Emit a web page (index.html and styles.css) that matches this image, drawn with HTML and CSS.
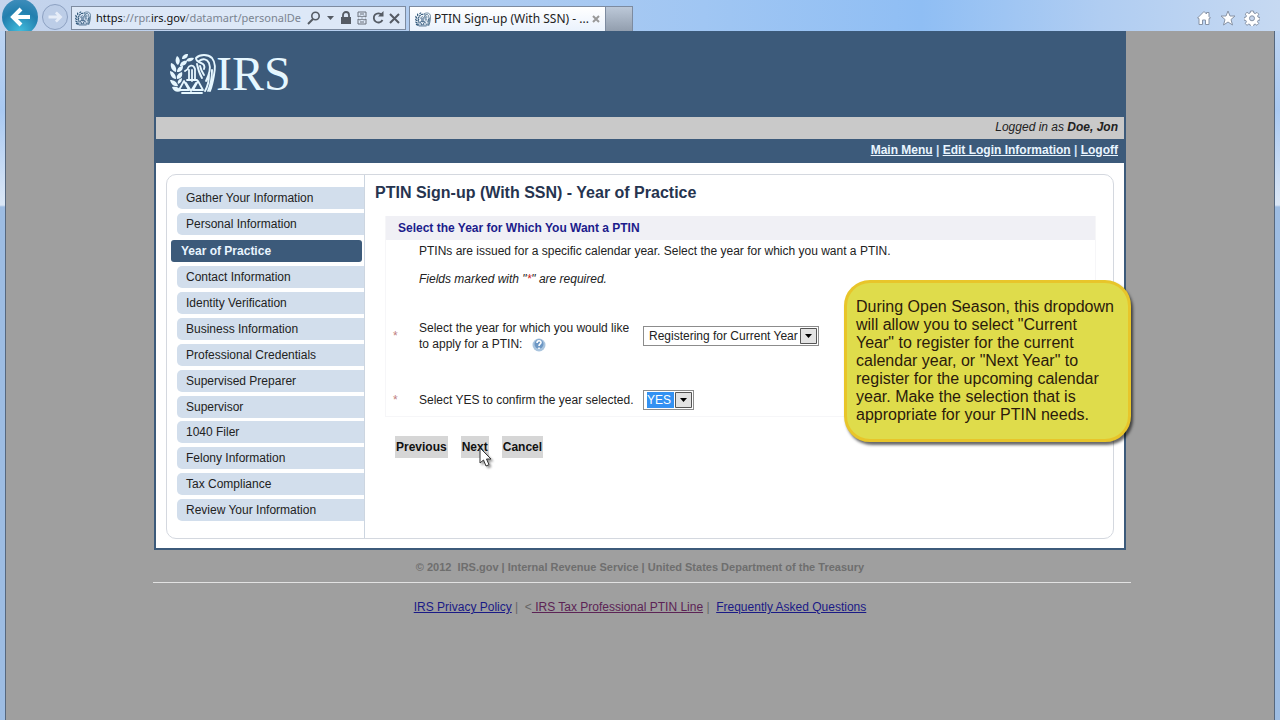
FILE: index.html
```html
<!DOCTYPE html>
<html lang="en">
<head>
<meta charset="utf-8">
<title>PTIN Sign-up (With SSN) - Year of Practice</title>
<link rel="stylesheet" href="styles.css">
</head>
<body>
<svg class="defs" aria-hidden="true">
  <symbol id="seal" viewBox="0 0 46 40">
    <path fill="currentColor" d="M12 5c0-3 2-5 6-5 0 3-2 5-6 5zM16 7c1-3 4-4 8-3-1 3-4 4-8 3zM8 11C5 9 5 5 7 2c3 2 4 6 1 9zM10 12c0-3 3-6 7-5 0 3-3 5-7 5zM6 18c-4-1-6-5-5-9 4 1 6 5 5 9zM7 18c0-4 3-6 6-6 0 4-2 6-6 6zM6 25c-4 0-6-4-6-8 4 1 6 4 6 8zM7 25c-1-4 2-6 5-7 1 4-1 7-5 7zM8 32c-4 1-7-2-8-6 4 0 7 2 8 6zM8 30c-1-3 1-5 4-6 0 3-1 5-4 6zM11 37c-4 2-8 0-9-4 4-1 7 0 9 4z"/>
    <g fill="none" stroke="currentColor" stroke-linecap="round" stroke-linejoin="round">
      <path stroke-width="1.800" d="M15 17c1-1 3-1 3-3 1-3 5-3 6-1l1 2v11M19 16v10M17 26h10M22 16v11M14 27l-5 9h10zM28 27l-5 9h10zM16 29l5 8 5-8M12 39h20"/>
      <path stroke-width="1.900" d="M26 4c4-4 12-4 16 0 4 5 3 11 2 17-1 6-2 11-4 16M29 7c4-3 8-2 10 2 2 5 0 12-3 18M26 4c0 3 2 4 5 5s4 3 3 6M27 10c1 5 2 9 5 14M30 12c1 4 2 6 4 9M42 16c0 8-1 14-4 21M39 20c0 6-1 12-4 17"/>
    </g>
  </symbol>
</svg>
<header class="chrome">
  <button class="back" aria-label="Back"><svg viewBox="0 0 36 36"><path d="M28 18H12M19 10l-8 8 8 8" fill="none" stroke="#fff" stroke-width="4"/></svg></button>
  <button class="forward" aria-label="Forward"><svg viewBox="0 0 26 26"><path d="M6 13h12M14 8l5 5-5 5" fill="none" stroke="#e6edf8" stroke-width="3"/></svg></button>
  <div class="address">
    <svg class="favicon"><use href="#seal"/></svg>
    <div class="url"><b>https</b>://rpr.<b>irs.gov</b>/datamart/personalDe</div>
    <div class="tools">
      <button aria-label="Search"><svg viewBox="0 0 14 14"><circle cx="8.500" cy="5" r="3.700" fill="none" stroke="#555b64" stroke-width="1.600"/><path d="M6 8l-5 5" stroke="#555b64" stroke-width="2"/></svg></button>
      <button aria-label="Show address list"><svg viewBox="0 0 14 14"><path d="M4 5h7L7.500 9z" fill="#555b64"/></svg></button>
      <button aria-label="Security report"><svg viewBox="0 0 14 14"><path d="M2 6h10v7H2z" fill="#555b64"/><path d="M4 6V4a3 3 0 0 1 6 0v2" fill="none" stroke="#555b64" stroke-width="1.800"/></svg></button>
      <button aria-label="Compatibility view"><svg viewBox="0 0 14 14"><path d="M3 6V1h8v5l-2-1-2 1-2-1zM3 8l2 1 2-1 2 1 2-1v5H3zM5 3h4M5 11h4" fill="none" stroke="#6b717a"/></svg></button>
      <button aria-label="Refresh"><svg viewBox="0 0 14 14"><path d="M11 4A4.600 4.600 0 1 0 11.500 9" fill="none" stroke="#555b64" stroke-width="1.800"/><path d="M12.500 0v5.500H7z" fill="#555b64"/></svg></button>
      <button aria-label="Stop"><svg viewBox="0 0 14 14"><path d="M3 3l9 9M12 3l-9 9" stroke="#555b64" stroke-width="2"/></svg></button>
    </div>
  </div>
  <div class="tab">
    <svg class="favicon"><use href="#seal"/></svg>
    <span class="tab-title">PTIN Sign-up (With SSN) - ...</span>
    <button class="tab-close" aria-label="Close tab"><svg viewBox="0 0 8 8"><path d="M1 1l6 6M7 1L1 7" stroke="#999" stroke-width="2"/></svg></button>
  </div>
  <button class="new-tab" aria-label="New tab"></button>
  <div class="commands">
    <button aria-label="Home"><svg viewBox="0 0 16 16"><path d="M1.500 8L8 1.500l2.500 2.500V2.500H13V6.500L14.500 8 13 8.500V14.500H9.500V10h-3v4.500H3V8.500z" fill="#fff" stroke="#8793a6"/></svg></button>
    <button aria-label="Favorites"><svg viewBox="0 0 16 16"><path d="M8 1l2 5h5l-4 3.500 1.500 5.500L8 12l-4.500 3L5 9.500 1 6h5z" fill="#fff" stroke="#8793a6"/></svg></button>
    <button aria-label="Tools"><svg viewBox="0 0 16 16"><path d="M6.500 1h3l.4 2 1.300.6 1.800-1.200 1.800 1.800-1.200 1.800.5 1.200 1.900.3v2.500l-2 .4-.5 1.300 1.200 1.800-1.800 1.800-1.700-1.200-1.300.5-.4 2h-3l-.4-2-1.300-.5-1.800 1.200-1.800-1.800 1.200-1.700-.5-1.300-2-.4V7.500l2-.4.5-1.200L1.200 4.100 3 2.300l1.800 1.200L6.100 3z" fill="#fff" stroke="#8793a6"/><circle cx="8" cy="8.300" r="2.500" fill="#c6d5ec" stroke="#8793a6"/></svg></button>
  </div>
</header>
<div class="viewport">
  <div class="page">
    <div class="site">
      <div class="banner">
        <svg class="seal"><use href="#seal"/></svg><span class="brand">IRS</span>
      </div>
      <div class="user">Logged in as <b>Doe, Jon</b></div>
      <nav class="links"><a href="#">Main Menu</a> | <a href="#">Edit Login Information</a> | <a href="#">Logoff</a></nav>
      <div class="body">
        <div class="frame">
          <nav class="steps">
            <a href="#">Gather Your Information</a>
            <a href="#">Personal Information</a>
            <a href="#" class="current" aria-current="step">Year of Practice</a>
            <a href="#">Contact Information</a>
            <a href="#">Identity Verification</a>
            <a href="#">Business Information</a>
            <a href="#">Professional Credentials</a>
            <a href="#">Supervised Preparer</a>
            <a href="#">Supervisor</a>
            <a href="#">1040 Filer</a>
            <a href="#">Felony Information</a>
            <a href="#">Tax Compliance</a>
            <a href="#">Review Your Information</a>
          </nav>
          <main class="content">
            <h1>PTIN Sign-up (With SSN) - Year of Practice</h1>
            <form>
              <section class="panel">
                <h2>Select the Year for Which You Want a PTIN</h2>
                <p>PTINs are issued for a specific calendar year. Select the year for which you want a PTIN.</p>
                <p class="note">Fields marked with "<span class="req">*</span>" are required.</p>
                <div class="row">
                  <span class="star">*</span>
                  <label for="year">Select the year for which you would like to apply for a PTIN: <svg class="help" viewBox="0 0 14 14" role="img" aria-label="Help"><circle cx="7" cy="7" r="6.500" fill="#a9c4de"/><circle cx="7" cy="6" r="4.500" fill="#6d97c4"/><path d="M5 5c0-3 4-3 4-.5C9 6 7 6 7 8M7 9.500V11" fill="none" stroke="#fff" stroke-width="1.600"/></svg></label>
                  <span class="picker"><select id="year" class="year"><option>Registering for Current Year</option><option>Registering for Next Year</option></select><svg class="arrow" viewBox="0 0 17 16"><path d="M.5.5h16v15H.5z" fill="#e3e3e3" stroke="#555"/><path d="M5 6h7l-3.500 4z" fill="#000"/></svg></span>
                </div>
                <div class="row">
                  <span class="star">*</span>
                  <label for="confirm">Select YES to confirm the year selected.</label>
                  <span class="picker"><select id="confirm" class="confirm"><option>YES</option><option>NO</option></select><svg class="arrow" viewBox="0 0 17 16"><path d="M.5.5h16v15H.5z" fill="#e3e3e3" stroke="#555"/><path d="M5 6h7l-3.500 4z" fill="#000"/></svg></span>
                </div>
              </section>
              <div class="actions">
                <button type="button">Previous</button>
                <button type="button">Next<svg class="cursor" viewBox="0 0 14 20"><path d="M1 1v15l3.500-3 2.500 6 3-1.300L7.500 12H12z" fill="#fff" stroke="#333"/></svg></button>
                <button type="button">Cancel</button>
              </div>
            </form>
          </main>
        </div>
      </div>
      <aside class="callout">During Open Season, this dropdown<br>will allow you to select "Current<br>Year" to register for the current<br>calendar year, or "Next Year" to<br>register for the upcoming calendar<br>year. Make the selection that is<br>appropriate for your PTIN needs.</aside>
    </div>
    <footer class="footer">
      <div class="copyright">© 2012 &nbsp;IRS.gov | Internal Revenue Service | United States Department of the Treasury</div>
      <div class="legal"><a href="#">IRS Privacy Policy</a> | &nbsp;&lt;<a href="#" class="visited">&nbsp;IRS Tax Professional PTIN Line</a> | &nbsp;<a href="#">Frequently Asked Questions</a></div>
    </footer>
  </div>
</div>
</body>
</html>
```
FILE: styles.css
```css
* { box-sizing: border-box; }
body {
  margin: 0;
  min-height: 100vh;
  display: flex;
  flex-direction: column;
  font: 12px/16px "Liberation Sans", Arial, sans-serif;
  color: #222;
  background: linear-gradient(#c4d8f2 0, #a9c9f2 110px, #dbe7f6 205px, #9dbce2 207px, #9dbce2 100%);
}
button { font: inherit; border: 0; padding: 0; background: none; }
svg { display: block; }
.defs { position: absolute; width: 0; height: 0; }

.chrome {
  height: 31px;
  display: flex;
  align-items: flex-end;
  overflow: hidden;
  padding-left: 2px;
  font-family: "Noto Sans", sans-serif;
  background: linear-gradient(90deg, #c5d4ec 0, #b2cdf0 33%, #a0c6f3 55%, #8fbef4 72%, #b0cdf2 86%, #c6d9f2 100%);
}
.back {
  width: 36px;
  height: 36px;
  margin-bottom: -4px;
  border-radius: 50%;
  background: radial-gradient(circle at 50% 90%, #42bddd, #237fae 55%, #4a93c0);
}
.forward {
  width: 26px;
  height: 26px;
  margin: 0 3px 1px 4px;
  border: 1px solid #8da1c2;
  border-radius: 50%;
  background: #bccde7;
}
.address {
  width: 335px;
  height: 24px;
  margin-bottom: 1px;
  display: flex;
  align-items: center;
  border: 1px solid #7d8ba0;
  background: #dde8f7;
  padding: 0 4px 0 3px;
}
.favicon { width: 16px; height: 15px; flex: none; color: #31597b; }
.url { flex: 1; margin-left: 5px; white-space: nowrap; font-size: 11px; color: #7b8491; }
.url b { font-weight: 400; color: #111; }
.tools { display: flex; gap: 2px; }
.tools button, .tools svg { width: 14px; height: 14px; }
.tab {
  width: 197px;
  height: 25px;
  margin-left: 3px;
  padding: 0 5px;
  display: flex;
  align-items: center;
  border: 1px solid #7d8ba0;
  border-bottom: 0;
  background: linear-gradient(#fff, #eaf2fd);
}
.tab-title { flex: 1; margin-left: 3px; white-space: nowrap; color: #222; }
.tab-close svg { width: 8px; height: 8px; }
.new-tab {
  width: 27px;
  height: 25px;
  border: 1px solid #7d8ba0;
  border-width: 1px 1px 0 0;
  background: linear-gradient(#bcc8d8, #929eae);
}
.commands { margin-left: auto; padding: 0 20px 5px 0; display: flex; gap: 8px; }
.commands svg { width: 16px; height: 16px; }

.viewport {
  flex: 1;
  margin: 0 5px;
  border: solid #56677d;
  border-width: 0 1px;
  background: #9f9f9f;
}
.page { max-width: 972px; margin: 0 auto; }
.site { position: relative; border: 2px solid #3c5a7a; border-top: 0; background: #fff; }
.banner {
  height: 86px;
  display: flex;
  align-items: center;
  padding-left: 14px;
  color: #e6f7ff;
  background: #3c5a7a;
}
.seal { width: 46px; height: 40px; }
.brand { font: 48px/52px "Liberation Serif", "Times New Roman", serif; }
.user {
  padding: 2px 6px 4px;
  text-align: right;
  font-style: italic;
  background: #c9c9c9;
}
.links {
  padding: 3px 6px 5px;
  text-align: right;
  font-weight: 700;
  color: #cfe3f5;
  background: #3c5a7a;
}
.links a { color: #e9f5ff; }
.body { padding: 11px 10px 9px; }
.frame {
  min-height: 365px;
  display: flex;
  border: 1px solid #d4d8df;
  border-radius: 10px;
}
.steps {
  width: 198px;
  flex: none;
  display: flex;
  flex-direction: column;
  justify-content: space-between;
  padding: 12px 0 17px 10px;
  border-right: 1px solid #ccd5e0;
}
.steps a {
  padding: 0 9px;
  line-height: 22px;
  color: #222;
  text-decoration: none;
  border-radius: 5px 0 0 5px;
  background: #d2deec;
}
.steps .current {
  margin: 1px 2px 1px -6px;
  padding: 0 10px;
  color: #e9f5ff;
  font-weight: 700;
  border-radius: 3px;
  background: #3c5a7a;
}
.content { flex: 1; padding: 8px 17px 20px 10px; }
h1 { margin: 0 0 13px; font-size: 16px; line-height: 20px; color: #26344f; }
.panel { margin-left: 10px; border: 1px solid #f6f6f8; border-top: 0; }
h2 {
  margin: 0;
  padding: 0 12px;
  font-size: 12px;
  line-height: 24px;
  color: #1c1c8c;
  background: #f0f0f5;
}
.panel p { margin: 3px 33px 0; }
.panel .note { margin-top: 12px; font-style: italic; }
.req { color: #c22; }
.row { display: flex; align-items: center; padding-left: 7px; margin-top: 33px; }
.row + .row { margin-top: 38px; margin-bottom: 6px; }
.star { width: 26px; flex: none; color: #c08080; }
.row label { width: 220px; margin-right: 4px; }
.help { display: inline-block; width: 14px; height: 14px; margin-left: 6px; vertical-align: -4px; }
.picker { position: relative; display: inline-flex; }
.picker select {
  appearance: none;
  height: 20px;
  margin: 0;
  padding: 1px 20px 1px 5px;
  font: inherit;
  color: #222;
  border: 1px solid #8c8c8c;
  border-radius: 0;
  background: #fff;
}
.picker .year { width: 176px; }
.picker .confirm {
  width: 51px;
  padding: 1px 19px 1px 3px;
  color: #fff;
  background: linear-gradient(#3391f2, #3391f2) content-box, #fff;
}
.arrow { position: absolute; right: 2px; top: 2px; width: 17px; height: 16px; pointer-events: none; }
.actions { display: flex; gap: 13px; margin: 19px 0 0 20px; }
.actions button {
  position: relative;
  padding: 0 1px;
  line-height: 22px;
  font-weight: 700;
  color: #111;
  background: #d6d6d6;
}
.cursor { position: absolute; left: 18px; top: 11px; width: 14px; height: 20px; filter: drop-shadow(2px 2px 1px #0006); }
.callout {
  position: absolute;
  right: -7px;
  top: 249px;
  width: 287px;
  padding: 15px 9px;
  font-size: 16px;
  line-height: 18px;
  white-space: nowrap;
  color: #2b1a0c;
  border: 3px solid #e8c52a;
  border-radius: 26px;
  background: #dfdc4b;
  box-shadow: 2px 3px 3px #0009;
}
.footer { text-align: center; color: #666; }
.copyright {
  margin: 0 -5px 0 -1px;
  padding: 9px 4px 7px 0;
  font-size: 11px;
  font-weight: 700;
  color: #6e6e6e;
  border-bottom: 1px solid #e2e2e2;
}
.legal { padding: 16px 0; }
.legal a { color: #1a1a86; }
.legal .visited { color: #5c2355; }
```
